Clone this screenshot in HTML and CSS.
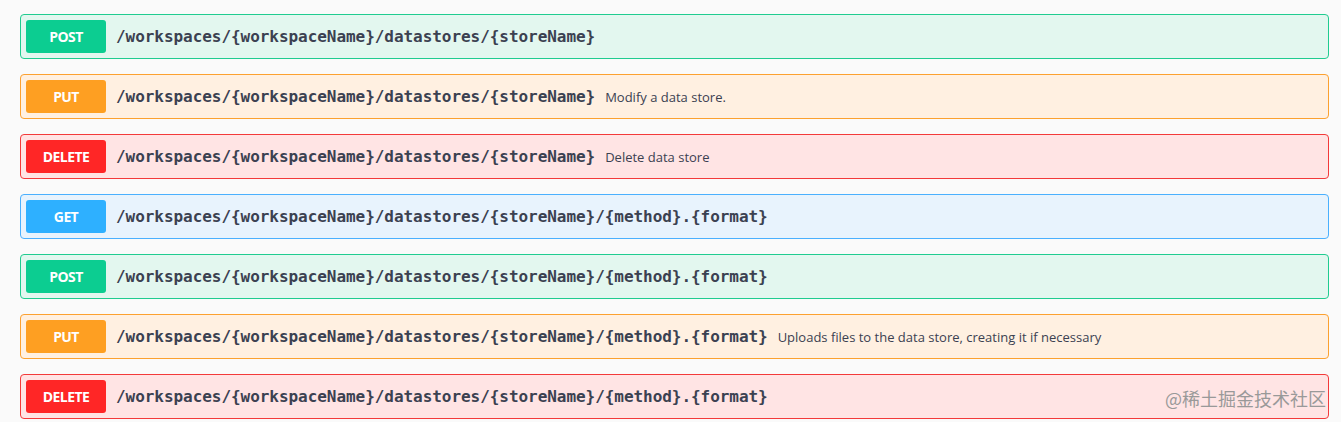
FILE: index.html
```html
<!DOCTYPE html>
<html lang="en">
<head>
<meta charset="utf-8">
<title>Datastores API</title>
<link rel="stylesheet" href="styles.css">
</head>
<body>
<div class="ops">
  <div class="op op-post">
    <span class="method">POST</span>
    <span class="path">/workspaces/{workspaceName}/datastores/{storeName}</span>
  </div>
  <div class="op op-put">
    <span class="method">PUT</span>
    <span class="path">/workspaces/{workspaceName}/datastores/{storeName}</span>
    <span class="desc">Modify a data store.</span>
  </div>
  <div class="op op-delete">
    <span class="method">DELETE</span>
    <span class="path">/workspaces/{workspaceName}/datastores/{storeName}</span>
    <span class="desc">Delete data store</span>
  </div>
  <div class="op op-get">
    <span class="method">GET</span>
    <span class="path">/workspaces/{workspaceName}/datastores/{storeName}/{method}.{format}</span>
  </div>
  <div class="op op-post">
    <span class="method">POST</span>
    <span class="path">/workspaces/{workspaceName}/datastores/{storeName}/{method}.{format}</span>
  </div>
  <div class="op op-put">
    <span class="method">PUT</span>
    <span class="path">/workspaces/{workspaceName}/datastores/{storeName}/{method}.{format}</span>
    <span class="desc">Uploads files to the data store, creating it if necessary</span>
  </div>
  <div class="op op-delete">
    <span class="method">DELETE</span>
    <span class="path">/workspaces/{workspaceName}/datastores/{storeName}/{method}.{format}</span>
  </div>
</div>
<div class="watermark">@稀土掘金技术社区</div>
</body>
</html>
```

FILE: styles.css
```css
html, body {
  margin: 0;
  padding: 0;
}
body {
  background: #fafafa;
  width: 1341px;
  height: 422px;
  overflow: hidden;
  position: relative;
  color: #3b4151;
}
.ops {
  display: flex;
  flex-direction: column;
  gap: 15px;
  padding: 14px 12px 0 20px;
}
.op {
  display: flex;
  align-items: center;
  height: 45px;
  box-sizing: border-box;
  padding: 5px;
  border: 1px solid;
  border-radius: 4px;
}
.method {
  width: 80px;
  height: 33px;
  border-radius: 3px;
  display: flex;
  align-items: center;
  justify-content: center;
  color: #fff;
  font-family: "Open Sans", sans-serif;
  font-weight: 700;
  font-size: 14px;
  letter-spacing: -0.6px;
  flex: none;
}
.path {
  font-family: "DejaVu Sans Mono", monospace;
  font-weight: 700;
  font-size: 16px;
  letter-spacing: -0.05px;
  color: #3b4151;
  padding: 0 10px;
  white-space: nowrap;
}
.desc {
  font-family: "Open Sans", sans-serif;
  font-size: 13px;
  color: #3b4151;
  white-space: nowrap;
}
.op-post { background: #e3f7ef; border-color: #20cc90; }
.op-post .method { background: #0ccd91; }
.op-put { background: #fff0e1; border-color: #fca130; }
.op-put .method { background: #fe9f22; }
.op-delete { background: #ffe4e4; border-color: #f33a3a; }
.op-delete .method { background: #ff2626; }
.op-get { background: #e8f3fd; border-color: #4ab0fe; }
.op-get .method { background: #2eb0ff; }
.watermark {
  position: absolute;
  left: 1165px;
  top: 387px;
  font-family: "Noto Sans CJK SC", sans-serif;
  font-size: 18px;
  line-height: 22px;
  color: #999;
  white-space: nowrap;
}
```
